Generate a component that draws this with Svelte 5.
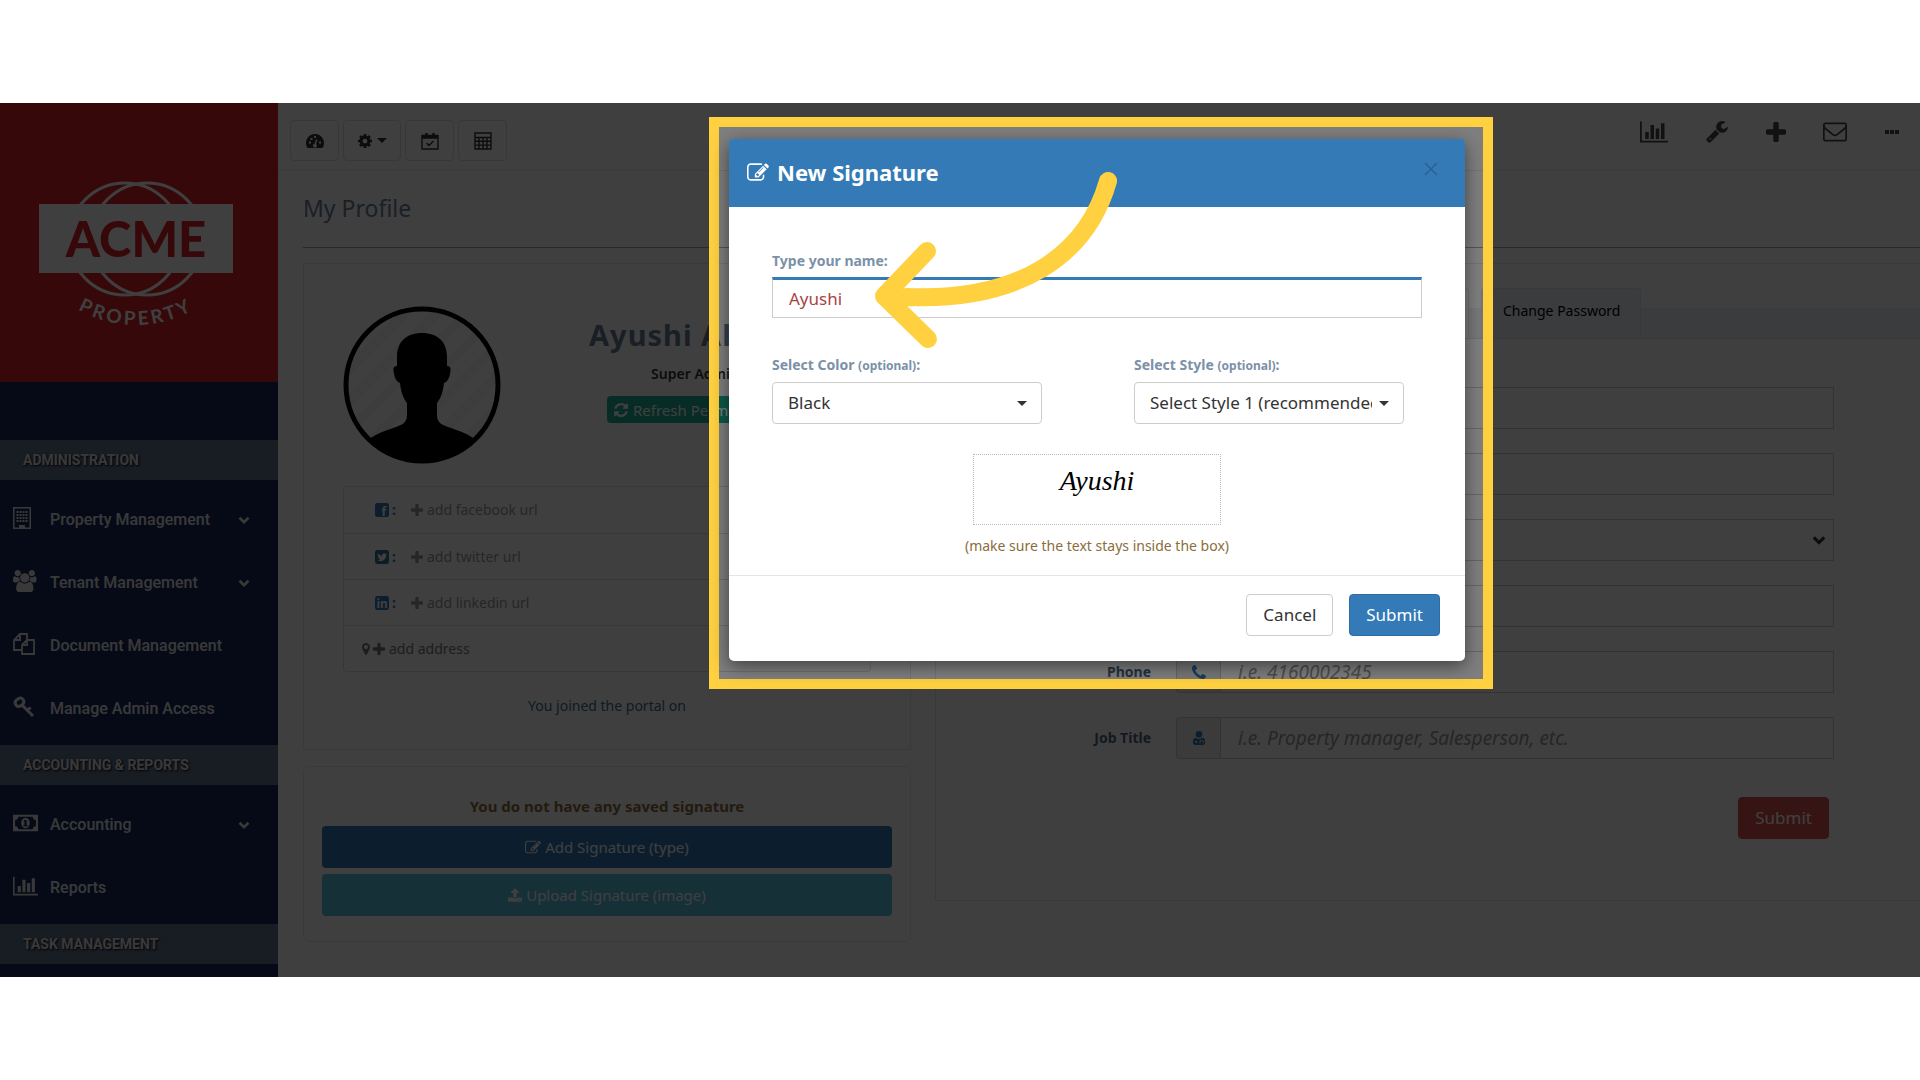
<script lang="ts">
  let name = $state('Ayushi');
  let color = $state('Black');
  let style = $state('1');

  let windows = '';
  for (let y = 4; y < 15; y += 3) {
    for (let x = 3; x < 15; x += 3) {
      windows += `M${x + 0.5} ${y}h2v2h-2z`;
    }
  }

  type Icon = { box: string; d: string; line?: number };

  const icons: Record<string, Icon> = {
    plus: { box: '192 128 1408 1408', d: 'M1600 736v192q0 40-28 68t-68 28h-416v416q0 40-28 68t-68 28h-192q-40 0-68-28t-28-68v-416h-416q-40 0-68-28t-28-68v-192q0-40 28-68t68-28h416v-416q0-40 28-68t68-28h192q40 0 68 28t28 68v416h416q40 0 68 28t28 68z' },
    cog: { box: '128 128 1536 1536', d: 'M1152 896q0-106-75-181t-181-75-181 75-75 181 75 181 181 75 181-75 75-181zm512-109v222q0 12-8 23t-20 13l-185 28q-19 54-39 91 35 50 107 138 10 12 10 25t-9 23q-27 37-99 108t-94 71q-12 0-26-9l-138-108q-44 23-91 38-16 136-29 186-7 28-36 28h-222q-14 0-24.5-8.5t-11.5-21.5l-28-184q-49-16-90-37l-141 107q-10 9-25 9-14 0-25-11-126-114-165-168-7-10-7-23 0-12 8-23 15-21 51-66.5t54-70.5q-27-50-41-99l-183-27q-13-2-21-12.5t-8-23.5v-222q0-12 8-23t19-13l186-28q14-46 39-92-40-57-107-138-10-12-10-24 0-10 9-23 26-36 98.5-107.5t94.5-71.5q13 0 26 10l138 107q44-23 91-38 16-136 29-186 7-28 36-28h222q14 0 24.5 8.5t11.5 21.5l28 184q49 16 90 37l142-107q9-9 24-9 13 0 25 10 129 119 165 170 7 8 7 22 0 12-8 23-15 21-51 66.5t-54 70.5q26 50 41 98l183 28q13 2 21 12.5t8 23.5z' },
    edit: { box: '0 128 1792 1408', d: 'M888 1184l116-116-152-152-116 116v56h96v96h56zm440-720q-16-16-33 1l-350 350q-17 17-1 33t33-1l350-350q17-17 1-33zm80 594v190q0 119-84.5 203.5t-203.5 84.5h-832q-119 0-203.5-84.5t-84.5-203.5v-832q0-119 84.5-203.5t203.5-84.5h832q63 0 117 25 15 7 18 23 3 17-9 29l-49 49q-14 14-32 8-23-6-45-6h-832q-66 0-113 47t-47 113v832q0 66 47 113t113 47h832q66 0 113-47t47-113v-126q0-13 9-22l64-64q15-15 35-7t20 29zm-96-738l288 288-672 672h-288v-288zm444 132l-92 92-288-288 92-92q28-28 68-28t68 28l152 152q28 28 28 68t-28 68z' },
    chart: { box: '0 128 2048 1536', d: 'M640 896v512h-256v-512h256zm384-512v1024h-256v-1024h256zm1024 1152v128h-2048v-1536h128v1408h1920zm-640-896v768h-256v-768h256zm384-384v1152h-256v-1152h256z' },
    refresh: { box: '128 128 1536 1536', d: 'M1639 1056q0 5-1 7-64 268-268 434.5t-478 166.5q-146 0-282.5-55t-243.5-157l-129 129q-19 19-45 19t-45-19-19-45v-448q0-26 19-45t45-19h448q26 0 45 19t19 45-19 45l-137 137q71 66 161 102t187 36q134 0 250-65t186-179q11-17 53-117 8-23 30-23h192q13 0 22.5 9.5t9.5 22.5zm25-800v448q0 26-19 45t-45 19h-448q-26 0-45-19t-19-45 19-45l138-138q-148-137-349-137-134 0-250 65t-186 179q-11 17-53 117-8 23-30 23h-199q-13 0-22.5-9.5t-9.5-22.5v-7q65-268 270-434.5t480-166.5q146 0 284 55.5t245 156.5l130-129q19-19 45-19t45 19 19 45z' },
    upload: { box: '64 64 1664 1600', d: 'M1344 1472q0-26-19-45t-45-19-45 19-19 45 19 45 45 19 45-19 19-45zm256 0q0-26-19-45t-45-19-45 19-19 45 19 45 45 19 45-19 19-45zm128-224v320q0 40-28 68t-68 28h-1472q-40 0-68-28t-28-68v-320q0-40 28-68t68-28h427q21 56 70.5 92t110.5 36h256q61 0 110.5-36t70.5-92h427q40 0 68 28t28 68zm-325-648q-17 40-59 40h-256v448q0 26-19 45t-45 19h-256q-26 0-45-19t-19-45v-448h-256q-42 0-59-40-17-39 14-69l448-448q18-19 45-19t45 19l448 448q31 30 14 69z' },
    wrench: { box: '64 128 1664 1664', d: 'M448 1472q0-26-19-45t-45-19-45 19-19 45 19 45 45 19 45-19 19-45zm644-420l-682 682q-37 37-90 37-52 0-91-37l-106-108q-38-36-38-90 0-53 38-91l681-681q39 98 114.5 173.5t173.5 114.5zm634-435q0 39-23 106-47 134-164.5 217.5t-258.5 83.5q-185 0-316.5-131.5t-131.5-316.5 131.5-316.5 316.5-131.5q58 0 121.5 16.5t107.5 46.5q16 11 16 28t-16 28l-293 169v224l193 107q5-3 79-48.5t135.5-81 70.5-35.5q15 0 23.5 10t8.5 25z' },
    mail: { box: '0 256 1792 1408', d: 'M1664 1504v-768q-32 36-69 66-268 206-426 338-51 43-83 67t-86.5 48.5-102.5 24.5h-2q-48 0-102.5-24.5t-86.5-48.5-83-67q-158-132-426-338-37-30-69-66v768q0 13 9.5 22.5t22.5 9.5h1472q13 0 22.5-9.5t9.5-22.5zm0-1051v-24.5l-.5-13-3-12.5-5.5-9-9-7.5-14-2.5h-1472q-13 0-22.5 9.5t-9.5 22.5q0 168 147 284 193 152 401 317 6 5 35 29.5t46 37.5 44.5 31.5 50.5 27.5 43 9h2q20 0 43-9t50.5-27.5 44.5-31.5 46-37.5 35-29.5q208-165 401-317 54-43 100.5-115.5t46.5-131.5zm128-37v1088q0 66-47 113t-113 47h-1472q-66 0-113-47t-47-113v-1088q0-66 47-113t113-47h1472q66 0 113 47t47 113z' },
    dots: { box: '0 0 16 6', d: 'M1 1h4v4H1zM6 1h4v4H6zM11 1h4v4h-4z' },
    pin: { box: '384 128 1024 1536', d: 'M1152 640q0-106-75-181t-181-75-181 75-75 181 75 181 181 75 181-75 75-181zm256 0q0 109-33 179l-364 774q-16 33-47.5 52t-67.5 19-67.5-19-46.5-52l-365-774q-33-70-33-179 0-212 150-362t362-150 362 150 150 362z' },
    phone: { box: '192 128 1408 1408', d: 'M1600 1240q0 27-10 70.5t-21 68.5q-21 50-122 106-94 51-186 51-27 0-53-3.5t-57.5-12.5-47-14.5-55.5-20.5-49-18q-98-35-175-83-127-79-264-216t-216-264q-48-77-83-175-3-9-18-49t-20.5-55.5-14.5-47-12.5-57.5-3.5-53q0-92 51-186 56-101 106-122 25-11 68.5-21t70.5-10q14 0 21 3 18 6 53 76 11 19 30 54t35 63.5 31 53.5q3 4 17.5 25t21.5 35.5 7 28.5q0 20-28.5 50t-62 55-62 53-28.5 46q0 9 5 22.5t8.5 20.5 14 24 11.5 19q76 137 174 235t235 174q2 1 19 11.5t24 14 20.5 8.5 22.5 5q18 0 46-28.5t53-62 55-62 50-28.5q14 0 28.5 7t35.5 21.5 25 17.5q25 15 53.5 31t63.5 35 54 30q70 35 76 53 3 7 3 21z' },
    users: { box: '0 0 1920 1792', d: 'M593 896q-162 5-265 128h-134q-82 0-138-40.5t-56-118.5q0-353 124-353 6 0 43.5 21t97.5 42.5 119 21.5q67 0 133-23-5 37-5 66 0 139 81 256zm1071 637q0 120-73 189.5t-194 69.5h-874q-121 0-194-69.5t-73-189.5q0-53 3.5-103.5t14-109 26.5-108.5 43-97.5 62-81 85.5-53.5 111.5-20q10 0 43 21.5t73 48 107 48 135 21.5 135-21.5 107-48 73-48 43-21.5q61 0 111.5 20t85.5 53.5 62 81 43 97.5 26.5 108.5 14 109 3.5 103.5zm-1024-1277q0 106-75 181t-181 75-181-75-75-181 75-181 181-75 181 75 75 181zm704 384q0 159-112.5 271.5t-271.5 112.5-271.5-112.5-112.5-271.5 112.5-271.5 271.5-112.5 271.5 112.5 112.5 271.5zm576 225q0 78-56 118.5t-138 40.5h-134q-103-123-265-128 81-117 81-256 0-29-5-66 66 23 133 23 59 0 119-21.5t97.5-42.5 43.5-21q124 0 124 353zm-128-609q0 106-75 181t-181 75-181-75-75-181 75-181 181-75 181 75 75 181z' },
    building: { box: '0 0 18 22', d: 'M0 0H18V22H0ZM1.5 1.5V20.5H6V18H12V20.5H16.5V1.5Z' + windows },
    files: { box: '0 0 22 22', line: 1.8, d: 'M8 17H1V7L7 1h7v5M7 1v6H1M9 12l5-5h7v14H9zM14 7v5H9' },
    key: { box: '0 0 22 22', line: 3, d: 'M10 3.500a3.500 3.500 0 0 0-4.500-1L3 4.500a3.500 3.500 0 0 0 0 4.500 3.500 3.500 0 0 0 4.500 1L10 8a3.500 3.500 0 0 0 0-4.500zM9 9l11 11M14.500 14.500l3-3' },
    money: { box: '0 0 24 16', d: 'M0 0h24v16H0zM5 2a3 3 0 0 1-3 3v6a3 3 0 0 1 3 3h14a3 3 0 0 1 3-3V5a3 3 0 0 1-3-3zM12 3c5.500 0 5.500 10 0 10S6.500 3 12 3zM11 5l-1 1.500h1V10h-1v1h4v-1h-1V5z' },
    chevron: { box: '0 0 16 12', line: 3.5, d: 'M2 3l6 6 6-6' },
    dash: { box: '0 0 18 14', d: 'M9 0a9 9 0 0 0-7.500 14h15A9 9 0 0 0 9 0zM3 7.500h2v2H3zM4.500 4h2v2h-2zM8 2h2v2H8zM13 7.500h2v2h-2zM10 5.500l1.500.5-1.500 4a2 2 0 1 1-1.500-.3z' },
    calendar: { box: '0 0 18 18', line: 1.4, d: 'M1 3.500h16V17H1zM1 4.500h16M1 6h16M5 1v4M6 1v4M12 1v4M13 1v4M5.500 11l2.500 2.500 4.500-4.500' },
    calc: { box: '0 0 18 18', line: 1.4, d: 'M1 1h16v16H1zM1 5.500h16M1 9.300h16M1 13.100h16M5 5.500V17M9 5.500V17M13 5.500V17' },
    doctor: { box: '0 0 14 16', d: 'M7 0a3.800 3.800 0 1 1 0 7.600A3.800 3.800 0 0 1 7 0zM3 7.500c2 2 6 2 8 0 2.500.8 3 3.500 3 6 0 1.500-1 2.500-2.500 2.500h-9C1 16 0 15 0 13.500c0-2.500.5-5.200 3-6zM2.800 11.500v2h2v-2zM9 10.500c-1.500.5-1.500 2-1.500 3.500h1c0-2 .5-2.500 1.500-2.500s1.500.5 1.500 2.500h1c0-2-.5-3.500-2-3.500z' }
  };

  const adminLinks = [
    { icon: 'building', label: 'Property Management', more: true },
    { icon: 'users', label: 'Tenant Management', more: true },
    { icon: 'files', label: 'Document Management', more: false },
    { icon: 'key', label: 'Manage Admin Access', more: false }
  ];

  const reportLinks = [
    { icon: 'money', label: 'Accounting', more: true },
    { icon: 'chart', label: 'Reports', more: false }
  ];
</script>

{#snippet icon(key: string, cls: string)}
  <svg class="icon {cls}" viewBox={icons[key].box} aria-hidden="true">
    {#if icons[key].line}
      <path d={icons[key].d} fill="none" stroke="currentColor" stroke-width={icons[key].line} />
    {:else}
      <path d={icons[key].d} fill="currentColor" fill-rule="evenodd" />
    {/if}
  </svg>
{/snippet}

{#snippet links(items: { icon: string; label: string; more: boolean }[])}
  <ul class="nav">
    {#each items as item}
      <li>
        <a href="#top">
          <span class="nav-icon">{@render icon(item.icon, 'side')}</span>
          <span class="nav-label">{item.label}</span>
          {#if item.more}{@render icon('chevron', 'i12')}{/if}
        </a>
      </li>
    {/each}
  </ul>
{/snippet}

<div class="stage" id="top">
  <div class="page">
    <aside class="sidebar">
      <div class="brand">
        <svg class="logo" viewBox="0 0 194 150" aria-label="ACME Property">
          <g fill="none" stroke="#fff" stroke-width="3">
            <circle cx="86" cy="60" r="56" />
            <circle cx="108" cy="60" r="56" />
          </g>
          <path d="M60 26h74v68H60z" fill="#dc2028" />
          <path d="M0 25h194v69H0z" fill="#fff" />
          <text class="acme" x="97" y="78" text-anchor="middle">ACME</text>
          <path id="arc" d="M32 126a116 116 0 0 0 130 0" fill="none" />
          <text class="property"><textPath href="#arc" startOffset="50%" text-anchor="middle">PROPERTY</textPath></text>
        </svg>
      </div>
      <h2>ADMINISTRATION</h2>
      {@render links(adminLinks)}
      <h2>ACCOUNTING &amp; REPORTS</h2>
      {@render links(reportLinks)}
      <h2>TASK MANAGEMENT</h2>
    </aside>

    <div class="content">
      <header class="topbar">
        <div class="tools">
          <button aria-label="Dashboard">{@render icon('dash', 'i18')}</button>
          <button aria-label="Settings">{@render icon('cog', 'i16')}<span class="caret"></span></button>
          <button aria-label="Calendar">{@render icon('calendar', 'i18')}</button>
          <button aria-label="Calculator">{@render icon('calc', 'i18')}</button>
        </div>
        <nav class="shortcuts">
          <a href="#top" aria-label="Reports">{@render icon('chart', 'i28')}</a>
          <a href="#top" aria-label="Maintenance">{@render icon('wrench', 'i24')}</a>
          <a href="#top" aria-label="Add">{@render icon('plus', 'i20')}</a>
          <a href="#top" aria-label="Mail">{@render icon('mail', 'i24')}</a>
          <a href="#top" aria-label="More">{@render icon('dots', 'i16')}</a>
        </nav>
      </header>

      <main>
        <h1>My Profile</h1>

        <div class="columns">
          <div class="left">
            <section class="card profile">
              <div class="who">
                <svg class="avatar" viewBox="0 0 158 158" aria-hidden="true">
                  <defs>
                    <pattern id="stripes" width="22" height="22" patternUnits="userSpaceOnUse" patternTransform="rotate(45)">
                      <path d="M0 0h22v22H0z" fill="#fff" />
                      <path d="M0 0h10v22H0z" fill="#f6f6f6" />
                    </pattern>
                    <clipPath id="round"><circle cx="79" cy="79" r="77" /></clipPath>
                  </defs>
                  <circle cx="79" cy="79" r="76" fill="url(#stripes)" />
                  <path clip-path="url(#round)" d="M79 27c-16 0-25 9-25 24v9c-4 0-4 3-3 8 1 5 3 8 6 9 1 9 3 15 7 20v12c0 8-5 10-14 13-9 3-19 7-25 12v30h108v-30c-6-5-16-9-25-12-9-3-14-5-14-13V97c4-5 6-11 7-20 3-1 5-4 6-9 1-5 1-8-3-8v-9c0-15-9-24-25-24z" />
                  <circle cx="79" cy="79" r="76" fill="none" stroke="#000" stroke-width="5" />
                </svg>
                <div class="who-text">
                  <strong class="who-name">Ayushi Al</strong>
                  <strong class="role">Super Admin</strong>
                  <button class="refresh">{@render icon('refresh', 'i14')} Refresh Permissions</button>
                </div>
              </div>
              <ul class="contacts">
                <li>
                  <svg class="icon i14 fb" viewBox="0 0 24 24" aria-hidden="true">
                    <rect width="24" height="24" rx="4" fill="currentColor" />
                    <text x="15" y="23" text-anchor="middle">f</text>
                  </svg>
                  <b class="fb">:</b>
                  <a href="#top">{@render icon('plus', 'i12')} add facebook url</a>
                </li>
                <li>
                  <svg class="icon i14 tw" viewBox="0 0 24 24" aria-hidden="true">
                    <rect width="24" height="24" rx="4" fill="currentColor" />
                    <path transform="translate(4 4) scale(.7)" fill="#fff" d="M23.953 4.57a10 10 0 01-2.825.775 4.958 4.958 0 002.163-2.723c-.951.555-2.005.959-3.127 1.184a4.92 4.92 0 00-8.384 4.482C7.69 8.095 4.067 6.13 1.64 3.162a4.822 4.822 0 00-.666 2.475c0 1.71.87 3.213 2.188 4.096a4.904 4.904 0 01-2.228-.616v.06a4.923 4.923 0 003.946 4.827 4.996 4.996 0 01-2.212.085 4.936 4.936 0 004.604 3.417 9.867 9.867 0 01-6.102 2.105c-.39 0-.779-.023-1.17-.067a13.995 13.995 0 007.557 2.209c9.053 0 13.998-7.496 13.998-13.985 0-.21 0-.42-.015-.63A9.935 9.935 0 0024 4.59z" />
                  </svg>
                  <b class="tw">:</b>
                  <a href="#top">{@render icon('plus', 'i12')} add twitter url</a>
                </li>
                <li>
                  <svg class="icon i14 li" viewBox="0 0 24 24" aria-hidden="true">
                    <rect width="24" height="24" rx="4" fill="currentColor" />
                    <text x="12" y="20" text-anchor="middle">in</text>
                  </svg>
                  <b class="li">:</b>
                  <a href="#top">{@render icon('plus', 'i12')} add linkedin url</a>
                </li>
                <li class="address">
                  {@render icon('pin', 'i12')}
                  <a href="#top">{@render icon('plus', 'i12')} add address</a>
                </li>
              </ul>
              <p class="joined">You joined the portal on</p>
            </section>

            <section class="card saved">
              <p>You do not have any saved signature</p>
              <button class="type">{@render icon('edit', 'i16')} Add Signature (type)</button>
              <button class="image">{@render icon('upload', 'i14')} Upload Signature (image)</button>
            </section>
          </div>

          <section class="card details">
            <div class="tabs">
              <span class="tab current"></span>
              <a class="tab" href="#top">Change Password</a>
            </div>
            <form onsubmit={(e) => e.preventDefault()}>
              <div class="field"><span></span><input aria-label="First name" /></div>
              <div class="field"><span></span><input aria-label="Last name" /></div>
              <div class="field">
                <span></span>
                <div class="picker">
                  <select aria-label="Gender"><option></option></select>
                  {@render icon('chevron', 'i14')}
                </div>
              </div>
              <div class="field"><span></span><input aria-label="Email" /></div>
              <div class="field">
                <label for="phone">Phone</label>
                <div class="group">
                  <span class="addon">{@render icon('phone', 'i14')}</span>
                  <input id="phone" placeholder="i.e. 4160002345" />
                </div>
              </div>
              <div class="field">
                <label for="job">Job Title</label>
                <div class="group">
                  <span class="addon">{@render icon('doctor', 'i16')}</span>
                  <input id="job" placeholder="i.e. Property manager, Salesperson, etc." />
                </div>
              </div>
              <button class="btn danger">Submit</button>
            </form>
          </section>
        </div>
      </main>
    </div>
  </div>

  <div class="backdrop">
    <div class="dialog">
      <div class="highlight"></div>
      <form class="modal" onsubmit={(e) => e.preventDefault()}>
        <div class="modal-header">
          {@render icon('edit', 'i22')}
          <h3>New Signature</h3>
          <button class="close" type="button" aria-label="Close">
            <svg class="icon i14" viewBox="0 0 14 14"><path d="M1 1l12 12M13 1L1 13" stroke="currentColor" stroke-width="1.5" /></svg>
          </button>
        </div>
        <div class="modal-body">
          <label for="name">Type your name:</label>
          <input id="name" type="text" bind:value={name} />
          <div class="options">
            <div>
              <label for="color">Select Color <small>(optional)</small>:</label>
              <div class="select">
                <select id="color" bind:value={color}>
                  <option>Black</option>
                </select>
                <span class="caret"></span>
              </div>
            </div>
            <div>
              <label for="style">Select Style <small>(optional)</small>:</label>
              <div class="select">
                <select id="style" bind:value={style}>
                  <option value="1">Select Style 1 (recommended)</option>
                </select>
                <span class="caret"></span>
              </div>
            </div>
          </div>
          <div class="preview">{name}</div>
          <p class="hint">(make sure the text stays inside the box)</p>
        </div>
        <div class="modal-footer">
          <button class="btn" type="button">Cancel</button>
          <button class="btn primary">Submit</button>
        </div>
      </form>
      <svg class="arrow" viewBox="0 0 212 186" aria-hidden="true">
        <path d="M197 17C176 91 109 138 -5 133M16 87L-27 132L17 175" />
      </svg>
    </div>
  </div>
</div>

<style>
  * {
    box-sizing: border-box;
  }

  :global(body) {
    margin: 0;
    background: #fff;
    color: #333;
    font-family: "Noto Sans", sans-serif;
    font-size: 14px;
    line-height: 20px;
  }

  h1, h2, h3, p, ul {
    margin: 0;
    padding: 0;
    list-style: none;
  }

  a {
    color: inherit;
    text-decoration: none;
  }

  button, input, select {
    font: inherit;
    color: inherit;
  }

  .icon {
    display: block;
    flex: none;
    overflow: visible;
  }

  .i12 { width: 12px; height: 12px; }
  .i14 { width: 14px; height: 14px; }
  .i16 { width: 16px; height: 14px; }
  .i18 { width: 18px; height: 18px; }
  .i20 { width: 20px; height: 20px; }
  .i22 { width: 22px; height: 18px; }
  .i24 { width: 24px; height: 22px; }
  .i28 { width: 28px; height: 22px; }

  .side {
    max-width: 25px;
    height: 22px;
    margin-bottom: 4px;
  }

  .caret {
    border: 5px solid transparent;
    border-top-color: currentColor;
    border-bottom: 0;
  }

  /* page */
  .stage {
    position: relative;
    overflow: hidden;
    margin: 103px 0;
  }

  .page {
    display: flex;
  }

  .sidebar {
    flex: none;
    width: 278px;
    padding-bottom: 13px;
    background: #1b2a58;
    color: #e4e6ea;
    font-family: Roboto, sans-serif;
  }

  .brand {
    padding: 76px 39px 53px;
    margin-bottom: 58px;
    background: #dc2028;
  }

  .logo {
    display: block;
    width: 194px;
    height: 150px;
  }

  .acme {
    font: 900 49px Lato, sans-serif;
    fill: #dc2028;
  }

  .property {
    font: 700 19px Lato, sans-serif;
    letter-spacing: 3px;
    fill: #fff;
  }

  .sidebar h2 {
    padding: 0 23px;
    background: #60708c;
    font-size: 14px;
    font-weight: 700;
    line-height: 40px;
    text-shadow: 1px 1px 2px #000;
  }

  .nav {
    padding: 8px 0 5px;
  }

  .nav a {
    display: flex;
    align-items: center;
    height: 63px;
    padding: 0 28px 0 13px;
    font-size: 16px;
    font-weight: 500;
  }

  .nav-icon {
    display: flex;
    width: 37px;
  }

  .nav-label {
    flex: 1;
  }

  .content {
    flex: 1;
    min-width: 0;
  }

  .topbar {
    display: flex;
    justify-content: space-between;
    height: 68px;
    padding: 17px 20px 0 12px;
    border-bottom: 1px solid #e7eaec;
  }

  .tools {
    display: flex;
    gap: 4px;
  }

  .tools button {
    display: flex;
    align-items: center;
    justify-content: center;
    gap: 4px;
    min-width: 49px;
    height: 41px;
    padding: 0 13px;
    border: 1px solid #ddd;
    border-radius: 4px;
    background: #fff;
  }

  .shortcuts {
    display: flex;
    align-items: center;
    gap: 37px;
    height: 24px;
    color: #444;
  }

  main {
    padding-left: 25px;
  }

  h1 {
    padding: 21px 0 23px;
    margin-bottom: 15px;
    border-bottom: 1px solid #aaa;
    color: #6a7f9b;
    font-size: 23px;
    font-weight: 400;
    line-height: 32px;
  }

  .columns {
    display: grid;
    grid-template-columns: 608fr 985fr;
    align-items: start;
    gap: 24px;
  }

  .card {
    border: 1px solid #e3e6e8;
  }

  .profile {
    height: 487px;
    margin-bottom: 16px;
    padding: 42px 39px 0;
  }

  .who {
    display: flex;
    gap: 88px;
    margin-bottom: 22px;
  }

  .avatar {
    flex: none;
    width: 158px;
    height: 158px;
  }

  .who-text {
    display: flex;
    flex-direction: column;
    align-items: center;
    width: 212px;
    padding-top: 9px;
  }

  .who-name {
    align-self: flex-start;
    color: #6a7f9b;
    font-size: 29px;
    line-height: 40px;
    letter-spacing: 1px;
    white-space: nowrap;
  }

  .role {
    padding: 9px 0 12px;
    font-weight: 600;
  }

  .refresh {
    display: flex;
    align-items: center;
    gap: 5px;
    height: 27px;
    padding: 0 7px;
    border: 0;
    border-radius: 4px;
    background: #1ab394;
    color: #fff;
    font-size: 15px;
    white-space: nowrap;
  }

  .contacts {
    border: 1px solid #ddd;
    border-radius: 4px;
  }

  .contacts li {
    display: flex;
    align-items: center;
    gap: 3px;
    height: 46px;
    padding-left: 31px;
    color: #999;
  }

  .contacts li + li {
    border-top: 1px solid #ddd;
  }

  .contacts a {
    display: flex;
    align-items: center;
    gap: 4px;
    margin-left: 12px;
  }

  .contacts .address {
    gap: 1px;
    padding-left: 16px;
    color: #777;
  }

  .contacts .address a {
    margin-left: 0;
  }

  .contacts text {
    font: 700 20px "Open Sans", sans-serif;
    fill: #fff;
  }

  .contacts .fb { color: #337ab7; }
  .contacts .tw { color: #31708f; }
  .contacts .li { color: #337ab7; }

  .joined {
    padding-top: 24px;
    color: #31708f;
    text-align: center;
  }

  .saved {
    padding: 29px 18px 25px;
    border-radius: 6px;
    font-size: 15px;
  }

  .saved p {
    margin-bottom: 10px;
    color: #8a6d3b;
    font-weight: 700;
    text-align: center;
  }

  .saved button {
    display: flex;
    align-items: center;
    justify-content: center;
    gap: 4px;
    width: 100%;
    height: 42px;
    border: 0;
    border-radius: 4px;
    color: #fff;
  }

  .saved .type {
    margin-bottom: 6px;
    background: #337ab7;
  }

  .saved .image {
    background: #5bc0de;
  }

  .details {
    padding: 24px 0 61px;
    border-right: 0;
  }

  .tabs {
    display: flex;
    gap: 12px;
    padding-left: 375px;
    border-bottom: 1px solid #dde2e8;
    background: linear-gradient(#fff 20px, #eef1f5 20px);
  }

  .tab {
    width: 160px;
    height: 50px;
    padding: 12px 21px;
    border: 1px solid #e1e5ea;
    border-bottom: 0;
    border-radius: 4px 4px 0 0;
    background: #eef1f5;
    color: #000;
    white-space: nowrap;
  }

  .tab.current {
    width: 158px;
    background: #fff;
  }

  .details form {
    padding: 48px 86px 0 0;
  }

  .field {
    display: grid;
    grid-template-columns: 215px 1fr;
    align-items: center;
    gap: 25px;
    margin-bottom: 24px;
  }

  .field label {
    color: #4d6580;
    font-weight: 700;
    text-align: right;
  }

  .field input, .field select {
    width: 100%;
    height: 42px;
    padding: 0 17px;
    border: 1px solid #ccc;
    border-radius: 0;
    background: #fff;
    font-size: 19px;
  }

  .field input::placeholder {
    color: #999;
    font-style: italic;
    opacity: 1;
  }

  .picker {
    position: relative;
  }

  .picker select {
    display: block;
    appearance: none;
  }

  .picker :global(svg) {
    position: absolute;
    top: 14px;
    right: 8px;
  }

  .group {
    display: flex;
  }

  .addon {
    display: flex;
    align-items: center;
    justify-content: center;
    flex: none;
    width: 44px;
    border: 1px solid #ccc;
    border-right: 0;
    border-radius: 4px 0 0 4px;
    background: #eee;
    color: #337ab7;
  }

  .btn {
    height: 42px;
    padding: 0 16px;
    border: 1px solid #ccc;
    border-radius: 4px;
    background: #fff;
    font-size: 17px;
  }

  .danger {
    display: block;
    margin: 38px 5px 0 auto;
    border-color: #d9534f;
    background: #d9534f;
    color: #fff;
  }

  /* dialog */
  .backdrop {
    position: absolute;
    inset: 0;
    display: flex;
    align-items: flex-start;
    justify-content: center;
    padding: 36px 0 0 274px;
    background: rgba(0, 0, 0, 0.5);
  }

  .dialog {
    position: relative;
    width: 736px;
  }

  .highlight {
    position: absolute;
    inset: -22px -28px -28px -20px;
    border: 10px solid #ffd140;
    box-shadow: 0 0 0 2000px rgba(0, 0, 0, 0.5);
  }

  .modal {
    position: relative;
    border-radius: 5px;
    background: #fff;
    box-shadow: 0 5px 18px rgba(0, 0, 0, 0.5);
  }

  .modal-header {
    display: flex;
    align-items: center;
    gap: 8px;
    height: 68px;
    padding: 0 27px 2px 18px;
    border-radius: 4px 4px 0 0;
    background: #337ab7;
    color: #fff;
  }

  h3 {
    flex: 1;
    font-size: 22px;
    line-height: 28px;
  }

  .close {
    padding: 0 0 6px;
    border: 0;
    background: none;
    color: #29628f;
  }

  .modal-body {
    padding: 44px 43px 19px;
    border-bottom: 1px solid #e5e5e5;
  }

  .modal-body label {
    display: block;
    margin-bottom: 6px;
    color: #7b91a8;
    font-weight: 700;
  }

  small {
    font-size: 12px;
  }

  .modal-body input {
    display: block;
    width: 100%;
    height: 41px;
    margin-bottom: 37px;
    padding: 0 16px;
    border: 1px solid #ccc;
    border-top: 3px solid #337ab7;
    color: #a94442;
    font-size: 17px;
  }

  .options {
    display: grid;
    grid-template-columns: 270px 270px;
    gap: 92px;
    margin-bottom: 30px;
  }

  .select {
    position: relative;
  }

  .select select {
    display: block;
    width: 100%;
    height: 42px;
    padding: 0 31px 0 15px;
    border: 1px solid #ccc;
    border-radius: 4px;
    background: #fff;
    font-size: 17px;
    appearance: none;
  }

  .select .caret {
    position: absolute;
    top: 19px;
    right: 15px;
  }

  .preview {
    width: 248px;
    height: 71px;
    margin: 0 auto 11px;
    padding-top: 8px;
    border: 1px dotted #bbb;
    color: #000;
    font-family: "Brush Script MT", "Liberation Serif", cursive;
    font-size: 28px;
    font-style: italic;
    line-height: 36px;
    text-align: center;
  }

  .hint {
    color: #8a6d3b;
    text-align: center;
  }

  .modal-footer {
    display: flex;
    justify-content: flex-end;
    gap: 16px;
    padding: 18px 25px 25px;
  }

  .primary {
    border-color: #2e6da4;
    background: #337ab7;
    color: #fff;
  }

  .arrow {
    position: absolute;
    top: 25px;
    left: 182px;
    width: 212px;
    height: 186px;
    overflow: visible;
    pointer-events: none;
  }

  .arrow path {
    fill: none;
    stroke: #ffd140;
    stroke-width: 18px;
    stroke-linecap: round;
    stroke-linejoin: round;
  }
</style>
